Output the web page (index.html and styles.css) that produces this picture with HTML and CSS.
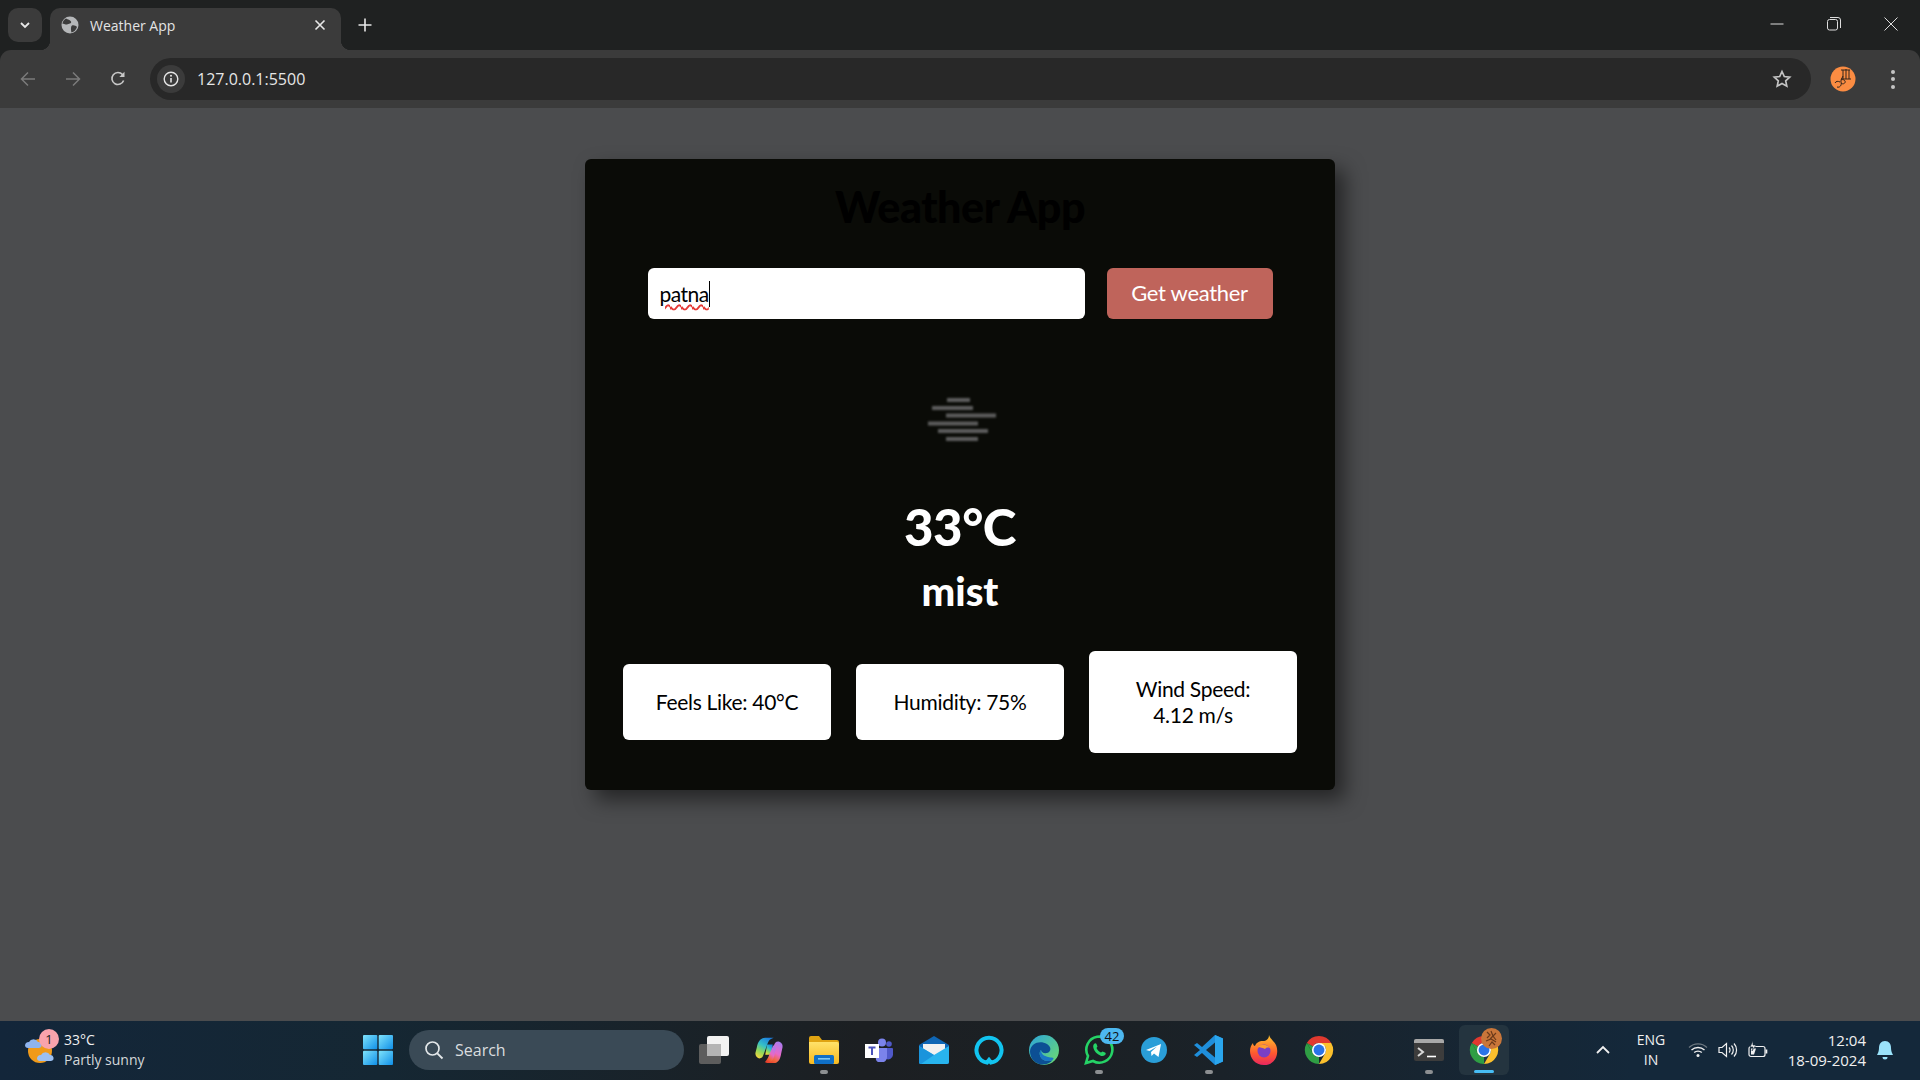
FILE: index.html
```html
<!DOCTYPE html>
<html lang="en">
<head>
<meta charset="UTF-8">
<meta name="viewport" content="width=device-width, initial-scale=1.0">
<title>Weather App</title>
<link rel="stylesheet" href="styles.css">
</head>
<body>

<svg class="defs" width="0" height="0">
    <defs>
        <symbol id="chrome" viewBox="0 0 32 32">
            <path d="M3 8.500L9.500 19.750A7.500 7.500 0 0 0 16 23.500L16 31A15 15 0 0 1 3 8.500Z" fill="#2f9e44"/>
            <path d="M29 8.500A15 15 0 0 1 16 31L22.500 19.750A7.500 7.500 0 0 0 22.500 12.250L16 8.500Z" fill="#fbc02d"/>
            <path d="M3 8.500A15 15 0 0 1 29 8.500H16A7.500 7.500 0 0 0 9.500 12.200Z" fill="#e0392f"/>
            <path d="M3 8.500L9.500 19.750L12 16L9.500 12.200Z" fill="#2f9e44"/>
            <circle cx="16" cy="16" r="7.500" fill="#fff"/>
            <circle cx="16" cy="16" r="5.800" fill="#2a73e8"/>
        </symbol>
        <linearGradient id="winBlue" x1="0" y1="0" x2="1" y2="1">
            <stop offset="0" stop-color="#7fe3fb"/>
            <stop offset="1" stop-color="#0f8fe8"/>
        </linearGradient>
        <linearGradient id="folder" x1="0" y1="0" x2="0" y2="1">
            <stop offset="0" stop-color="#ffe26a"/>
            <stop offset="1" stop-color="#f7b91f"/>
        </linearGradient>
        <linearGradient id="copilotLeft" x1=".7" y1="0" x2=".2" y2="1">
            <stop offset="0" stop-color="#1d7fe0"/>
            <stop offset=".4" stop-color="#35c0c8"/>
            <stop offset=".7" stop-color="#8fd85a"/>
            <stop offset="1" stop-color="#f4d63e"/>
        </linearGradient>
        <linearGradient id="copilotRight" x1=".8" y1="0" x2=".3" y2="1">
            <stop offset="0" stop-color="#a87cf0"/>
            <stop offset=".5" stop-color="#e868c8"/>
            <stop offset=".8" stop-color="#f0683c"/>
            <stop offset="1" stop-color="#e8402c"/>
        </linearGradient>
        <linearGradient id="edge" x1="0" y1="0" x2="1" y2="1">
            <stop offset="0" stop-color="#2ba5dc"/>
            <stop offset="1" stop-color="#6fdc6a"/>
        </linearGradient>
        <linearGradient id="fox" x1="0" y1="0" x2="0" y2="1">
            <stop offset="0" stop-color="#ffc62e"/>
            <stop offset=".6" stop-color="#ff5a2e"/>
            <stop offset="1" stop-color="#e9275f"/>
        </linearGradient>
    </defs>
</svg>

<div class="tabstrip">
    <div class="tab-search">
        <svg width="12" height="12" viewBox="0 0 12 12"><path d="M2 4l4 4 4-4" fill="none" stroke="#e8e8e8" stroke-width="1.800"/></svg>
    </div>
    <div class="tab">
        <svg class="favicon" width="18" height="18" viewBox="0 0 18 18">
            <circle cx="9" cy="9" r="8.500" fill="#b5b7b9"/>
            <path d="M5 2.500C7 4 9 3.500 10 5.500S7.500 8 6 8.500 3 7 1.500 8C1.500 5.500 3 3.500 5 2.500ZM11 9.500C13 9 15 10 16 11 15 14 13 16 10.500 16.500 10 14.500 9.500 10.500 11 9.500Z" fill="#3b3b3b"/>
        </svg>
        <span class="tab-title">Weather App</span>
        <svg class="tab-close" width="12" height="12" viewBox="0 0 12 12"><path d="M1.500 1.500l9 9M10.500 1.500l-9 9" stroke="#e8e8e8" stroke-width="1.600"/></svg>
    </div>
    <div class="new-tab">
        <svg width="14" height="14" viewBox="0 0 14 14"><path d="M7 .5v13M.5 7h13" stroke="#e8e8e8" stroke-width="1.600"/></svg>
    </div>
    <div class="window-controls">
        <div class="win-btn"><svg width="14" height="14" viewBox="0 0 14 14"><path d="M.500 7h13" stroke="#ddd" stroke-width="1"/></svg></div>
        <div class="win-btn"><svg width="14" height="14" viewBox="0 0 14 14"><rect x=".5" y="2.500" width="10" height="10.500" rx="2" fill="none" stroke="#ddd"/><path d="M3 .5h8a2.500 2.500 0 0 1 2.500 2.500v8" fill="none" stroke="#ddd"/></svg></div>
        <div class="win-btn"><svg width="14" height="14" viewBox="0 0 14 14"><path d="M.500.500l13 13M13.500.500l-13 13" stroke="#ddd" stroke-width="1"/></svg></div>
    </div>
</div>

<div class="toolbar">
    <div class="nav-btn"><svg width="16" height="16" viewBox="0 0 16 16"><path d="M15 8H1.500M8 1.500L1.500 8 8 14.500" fill="none" stroke="#7b7b7b" stroke-width="1.500"/></svg></div>
    <div class="nav-btn"><svg width="16" height="16" viewBox="0 0 16 16"><path d="M1 8h13.500M8 1.500L14.500 8 8 14.500" fill="none" stroke="#7b7b7b" stroke-width="1.500"/></svg></div>
    <div class="nav-btn"><svg width="16" height="16" viewBox="0 0 16 16"><path d="M13.600 9.500A6 6 0 1 1 12.500 3.600" fill="none" stroke="#c8c8c8" stroke-width="1.600"/><path d="M14.500 .8v5.200H9.300z" fill="#c8c8c8"/></svg></div>
    <div class="omnibox">
        <div class="site-info">
            <svg width="16" height="16" viewBox="0 0 16 16"><circle cx="8" cy="8" r="6.800" fill="none" stroke="#e4e4e4" stroke-width="1.400"/><path d="M8 7v4.500" stroke="#e4e4e4" stroke-width="1.600"/><circle cx="8" cy="4.800" r="1" fill="#e4e4e4"/></svg>
        </div>
        <span class="url">127.0.0.1:5500</span>
        <svg class="star" width="20" height="20" viewBox="0 0 20 20"><path d="M10 2.500l2.300 5 5.400.6-4 3.700 1.100 5.400L10 14.500l-4.800 2.700 1.100-5.400-4-3.700 5.400-.6z" fill="none" stroke="#c4c4c4" stroke-width="1.700"/></svg>
    </div>
    <svg class="avatar" width="26" height="26" viewBox="0 0 26 26">
        <circle cx="13" cy="13" r="12.500" fill="#fb8c42"/>
        <path d="M11 4h9M13 4v9M16 3v10M19 4v9M11 13h10M7 21c3 1 5-2 4-5s3-3 4-1-2 4-4 2M5 17c1-2 3-2 5-1M13 10l-2 4" fill="none" stroke="#33241b" stroke-width="1"/>
    </svg>
    <div class="menu-dots"><span></span><span></span><span></span></div>
</div>

<div class="page">
    <div class="card">
        <h1 class="app-title">Weather App</h1>
        <div class="search-form">
            <div class="city-input"><span class="city-text">patna</span></div>
            <button class="get-btn">Get weather</button>
        </div>
        <svg class="weather-icon" width="100" height="100" viewBox="0 0 100 100">
            <g class="mist-bars">
                <rect x="37" y="28" width="23" height="4"/>
                <rect x="22" y="36" width="41" height="4"/>
                <rect x="36" y="43.500" width="50" height="4"/>
                <rect x="18" y="51.500" width="50" height="4"/>
                <rect x="28" y="59" width="50" height="4"/>
                <rect x="36" y="67" width="32" height="4"/>
            </g>
        </svg>
        <div class="temp">33°C</div>
        <div class="desc">mist</div>
        <div class="details">
            <div class="detail">Feels Like: 40°C</div>
            <div class="detail">Humidity: 75%</div>
            <div class="detail">Wind Speed:<br>4.12 m/s</div>
        </div>
    </div>
</div>

<div class="taskbar">
    <div class="weather-widget">
        <div class="widget-icon">
            <svg width="32" height="34" viewBox="0 0 32 34">
                <circle cx="16" cy="18" r="12" fill="#f09a1a"/>
                <path d="M1 13a4 4 0 0 1 4-4 5 5 0 0 1 9 0 3 3 0 0 1 1 6H4a3 3 0 0 1-3-2Z" fill="#8fb4ee"/>
                <path d="M13 26a4 4 0 0 1 4-4 5 5 0 0 1 9 0 3 3 0 0 1 1 6H16a3 3 0 0 1-3-2Z" fill="#9cc0f2"/>
            </svg>
            <span class="widget-badge">1</span>
        </div>
        <div class="widget-text">
            <div class="widget-temp">33°C</div>
            <div class="widget-desc">Partly sunny</div>
        </div>
    </div>

    <div class="slot">
        <svg width="30" height="30" viewBox="0 0 30 30">
            <rect x="0" y="0" width="14.300" height="14.300" rx="1" fill="url(#winBlue)"/>
            <rect x="15.700" y="0" width="14.300" height="14.300" rx="1" fill="url(#winBlue)"/>
            <rect x="0" y="15.700" width="14.300" height="14.300" rx="1" fill="url(#winBlue)"/>
            <rect x="15.700" y="15.700" width="14.300" height="14.300" rx="1" fill="url(#winBlue)"/>
        </svg>
    </div>
    <div class="search-pill">
        <svg width="20" height="20" viewBox="0 0 20 20"><circle cx="8.500" cy="8.500" r="6.500" fill="none" stroke="#e4e8ea" stroke-width="1.700"/><path d="M13.300 13.300L18.500 18.500" stroke="#e4e8ea" stroke-width="1.900"/></svg>
        <span>Search</span>
    </div>

    <div class="slot first-app">
        <svg width="30" height="28" viewBox="0 0 30 28">
            <rect x="0" y="8" width="22" height="20" rx="2" fill="#5d5d5d"/>
            <rect x="8" y="0" width="22" height="20" rx="2" fill="#f2f2f2"/>
            <rect x="8" y="8" width="14" height="12" fill="#b4b4b4"/>
        </svg>
    </div>
    <div class="slot">
        <svg width="30" height="28" viewBox="0 0 30 30">
            <path d="M20 29h-9c3-1 4-4 5-7l4-11c1-3 2-5 5-5 3 .5 5 3 4.500 6L28 19c-1 6-3 10-8 10Z" fill="url(#copilotRight)"/>
            <path d="M20 2h-9C6 2 3 6 2 12L.5 18c-.5 3 1.500 5 4 6 3 0 4-2 5-5l4-11c1-3 3-5 6.500-6Z" fill="url(#copilotLeft)"/>
            <path d="M13 9h6l-2 11h-6Z" fill="url(#copilotLeft)"/>
            <path d="M19.500 10l-5 12c-1 2-2 4-4 6h6c2-1 3-3 4-6l2-9Z" fill="url(#copilotRight)"/>
        </svg>
    </div>
    <div class="slot running">
        <svg width="30" height="28" viewBox="0 0 30 28">
            <path d="M0 2a2 2 0 0 1 2-2h8l3 4h15a2 2 0 0 1 2 2v4H0Z" fill="#e0a412"/>
            <path d="M0 6h28a2 2 0 0 1 2 2v18a2 2 0 0 1-2 2H2a2 2 0 0 1-2-2Z" fill="url(#folder)"/>
            <rect x="5" y="19" width="20" height="9" rx="1.500" fill="#0f6fc6"/>
            <rect x="9" y="22" width="12" height="1.600" fill="#7cc7f5"/>
        </svg>
    </div>
    <div class="slot">
        <svg width="28" height="24" viewBox="0 0 28 24">
            <circle cx="17" cy="4.500" r="4" fill="#7b83eb"/>
            <circle cx="24" cy="6" r="2.800" fill="#5059c9"/>
            <path d="M20 10h7a1 1 0 0 1 1 1v6a5 5 0 0 1-7 4Z" fill="#5059c9"/>
            <path d="M10 10h12v9a6 6 0 0 1-11 3Z" fill="#7b83eb"/>
            <rect x="0" y="6" width="14" height="14" fill="#fff"/>
            <path d="M3.500 9.500h7M7 9.500v7.500" stroke="#4b53bc" stroke-width="2"/>
        </svg>
    </div>
    <div class="slot">
        <svg width="30" height="28" viewBox="0 0 30 28">
            <path d="M0 9L15 0l15 9v17a2 2 0 0 1-2 2H2a2 2 0 0 1-2-2Z" fill="#0f66b5"/>
            <path d="M4 8h22v6l-11 6-11-6Z" fill="#f1f1f1"/>
            <path d="M0 10l15 9 15-9v16a2 2 0 0 1-2 2H2a2 2 0 0 1-2-2Z" fill="#28b4ee"/>
            <path d="M0 26V10l15 9L2 28a2 2 0 0 1-2-2Z" fill="#1a94dc"/>
        </svg>
    </div>
    <div class="slot">
        <svg width="30" height="30" viewBox="0 0 30 30">
            <path d="M13 27.500A12.500 12.500 0 1 1 17 27.500L15 25Z" fill="none" stroke="#12c4f0" stroke-width="4"/>
        </svg>
    </div>
    <div class="slot">
        <svg width="30" height="30" viewBox="0 0 30 30">
            <circle cx="15" cy="15" r="15" fill="url(#edge)"/>
            <path d="M1 16C2 8 11 5 18 9c5 3 4 8 0 9-3 .5-6-.5-6-3-3 3-1 11 7 11 2 0 4-.5 5-1.500C21 29 15 30.500 10 29 4 27 1 22 1 16Z" fill="#0c4f94"/>
            <path d="M12 15c-3 3-1 11 7 11 2 0 4-.5 5-1.500C26 22 22 23 19 22c-4-1-7-3-7-7Z" fill="#1976c6"/>
        </svg>
    </div>
    <div class="slot running">
        <svg width="30" height="30" viewBox="0 0 30 30">
            <path d="M2 28l2-7A13 13 0 1 1 9 26Z" fill="none" stroke="#25d366" stroke-width="2.600"/>
            <path d="M10 9c1-1 2-1 2.500 0l1 2.500-1 1.500c1 2 2.500 3.500 4.500 4.500l1.500-1 2.500 1c1 .5 1 1.500 0 2.500-2 2-5 1-8-1.500S8 11 10 9Z" fill="#25d366"/>
        </svg>
        <span class="count-badge">42</span>
    </div>
    <div class="slot">
        <svg width="26" height="26" viewBox="0 0 26 26">
            <circle cx="13" cy="13" r="13" fill="#2a9ed8"/>
            <path d="M5 13l15-6-2.500 13-4.500-3.500-2.500 2.500-.5-4 6-5.500-7.500 4.500Z" fill="#fff"/>
        </svg>
    </div>
    <div class="slot running">
        <svg width="30" height="30" viewBox="0 0 30 30">
            <path d="M21 0l8 3.500v23L21 30 8 18l-5 4-3-2 6-5-6-5 3-2 5 4Z" fill="#1f8fdc"/>
            <path d="M21 7.500L12 15l9 7.500Z" fill="#1c2a33"/>
            <path d="M21 0l8 3.500v23L21 30Z" fill="#2aa6ee"/>
        </svg>
    </div>
    <div class="slot">
        <svg width="28" height="30" viewBox="0 0 28 30">
            <path d="M19 0c1 4 5 6 7 10 3 7 1 20-12 20C5 30 0 23 0 16c0-3 1-6 3-8 0 2 1 3 2 3 1-3 4-5 8-5 3 0 6-2 6-6Z" fill="url(#fox)"/>
            <circle cx="14" cy="16" r="6.500" fill="#7a3fc4"/>
            <path d="M8 12c3-3 9-3 12 1-3-1-4 0-5 1-2-1-5-2-7-2Z" fill="#ff9d2e"/>
        </svg>
    </div>
    <div class="slot"><svg width="30" height="30"><use href="#chrome"/></svg></div>

    <div class="slot running terminal-slot">
        <svg width="30" height="22" viewBox="0 0 30 22">
            <rect width="30" height="22" rx="2" fill="#3c3c3c"/>
            <path d="M0 2a2 2 0 0 1 2-2h26a2 2 0 0 1 2 2v2H0Z" fill="#a8a8a8"/>
            <path d="M4 9l5 4-5 4" fill="none" stroke="#d8d8d8" stroke-width="2"/>
            <path d="M13 17.500h9" stroke="#fff" stroke-width="1.600"/>
        </svg>
    </div>
    <div class="slot active">
        <div class="active-box">
            <svg width="30" height="30"><use href="#chrome"/></svg>
            <svg class="profile-badge" width="21" height="21" viewBox="0 0 21 21">
                <circle cx="10.500" cy="10.500" r="10.500" fill="#c9763a"/>
                <path d="M6 4l3 3-3 3M10 3l2 5-3 3M15 5l-3 3 3 4M5 13l5-2 5 3M8 18l3-4 3 3" fill="none" stroke="#6b3a1a" stroke-width="1.200"/>
            </svg>
        </div>
    </div>

    <div class="tray">
        <svg class="tray-chevron" width="16" height="16" viewBox="0 0 16 16"><path d="M2 11l6-6 6 6" fill="none" stroke="#f0f0f0" stroke-width="1.800"/></svg>
        <div class="lang">ENG<br>IN</div>
        <svg class="tray-icon wifi" width="20" height="20" viewBox="0 0 20 20">
            <path d="M1 7.500a13 13 0 0 1 18 0" fill="none" stroke="#6d7880" stroke-width="1.300"/>
            <path d="M3.500 10a9.500 9.500 0 0 1 13 0M6.200 12.600a5.500 5.500 0 0 1 7.600 0" fill="none" stroke="#f0f0f0" stroke-width="1.400"/>
            <circle cx="10" cy="15.500" r="1.500" fill="#f0f0f0"/>
        </svg>
        <svg class="tray-icon" width="20" height="20" viewBox="0 0 20 20">
            <path d="M1 7.500h3L8.500 3.500v13L4 12.500H1Z" fill="none" stroke="#f0f0f0" stroke-width="1.200"/>
            <path d="M11 7.500a3.500 3.500 0 0 1 0 5M13.500 5.500a6.500 6.500 0 0 1 0 9M16 3.500a9.500 9.500 0 0 1 0 13" fill="none" stroke="#f0f0f0" stroke-width="1.200"/>
        </svg>
        <svg class="tray-icon" width="20" height="20" viewBox="0 0 20 20">
            <rect x="1" y="6.500" width="16" height="10" rx="2" fill="none" stroke="#f0f0f0" stroke-width="1.200"/>
            <rect x="17.500" y="9.500" width="1.800" height="4" fill="#f0f0f0"/>
            <path d="M3 8.500h5l-2 6H3Z" fill="#f0f0f0"/>
            <path d="M5 1L2 7h3l-1 4 4-6H5Z" fill="#f0f0f0" stroke="#14283a" stroke-width=".6"/>
        </svg>
        <div class="clock">
            <div>12:04</div>
            <div>18-09-2024</div>
        </div>
        <svg class="tray-icon bell" width="20" height="22" viewBox="0 0 20 22">
            <path d="M10 2c4 0 6 3 6 7 0 3 1 5 2 7H2c1-2 2-4 2-7 0-4 2-7 6-7Z" fill="#9be3fb"/>
            <path d="M7.500 18h5a2.500 2.500 0 0 1-5 0Z" fill="#9be3fb"/>
        </svg>
    </div>
</div>

</body>
</html>
```

FILE: styles.css
```css
* {
    box-sizing: border-box;
}
html, body {
    height: 100%;
}
body {
    margin: 0;
    height: 100vh;
    overflow: hidden;
    display: flex;
    flex-direction: column;
    background-color: #1f2121;
    font-family: "Open Sans", "Liberation Sans", sans-serif;
}
.defs {
    position: absolute;
}

/* browser tabs */
.tabstrip {
    height: 50px;
    flex-shrink: 0;
    display: flex;
    align-items: flex-start;
    padding: 8px 0 0 8px;
}
.tab-search {
    width: 34px;
    height: 34px;
    border-radius: 10px;
    background-color: #3b3b3b;
    display: flex;
    align-items: center;
    justify-content: center;
}
.tab {
    position: relative;
    width: 291px;
    height: 42px;
    margin-left: 8px;
    padding: 0 15px 8px 11px;
    background-color: #3b3b3b;
    border-radius: 10px 10px 0 0;
    display: flex;
    align-items: center;
    gap: 11px;
    color: #e3e3e3;
    font-size: 14px;
}
.tab::before,
.tab::after {
    content: "";
    position: absolute;
    bottom: 0;
    width: 10px;
    height: 10px;
}
.tab::before {
    left: -10px;
    background: radial-gradient(circle at 0 0, transparent 10px, #3b3b3b 10.5px);
}
.tab::after {
    right: -10px;
    background: radial-gradient(circle at 100% 0, transparent 10px, #3b3b3b 10.5px);
}
.tab-title {
    flex: 1;
}
.new-tab {
    width: 24px;
    height: 34px;
    margin-left: 12px;
    display: flex;
    align-items: center;
    justify-content: center;
}
.window-controls {
    margin-left: auto;
    padding-right: 1px;
    display: flex;
}
.win-btn {
    width: 57px;
    height: 32px;
    display: flex;
    align-items: center;
    justify-content: center;
}

/* address bar */
.toolbar {
    height: 58px;
    flex-shrink: 0;
    display: flex;
    align-items: center;
    padding: 0 21px 0 5px;
    background-color: #3b3b3b;
    border-radius: 11px 11px 0 0;
}
.nav-btn {
    width: 45px;
    display: flex;
    justify-content: center;
}
.omnibox {
    flex: 1;
    height: 42px;
    margin-left: 10px;
    padding: 0 19px 0 7px;
    display: flex;
    align-items: center;
    background-color: #282828;
    border-radius: 21px;
}
.site-info {
    width: 28px;
    height: 28px;
    border-radius: 50%;
    background-color: #3b3b3b;
    display: flex;
    align-items: center;
    justify-content: center;
}
.url {
    margin-left: 12px;
    color: #e6e6e6;
    font-size: 16px;
}
.star {
    margin-left: auto;
}
.avatar {
    margin-left: 19px;
}
.menu-dots {
    width: 12px;
    margin-left: 31px;
    display: flex;
    flex-direction: column;
    align-items: center;
    gap: 3.500px;
}
.menu-dots span {
    width: 4px;
    height: 4px;
    border-radius: 50%;
    background-color: #c4c4c4;
}

/* weather app */
.page {
    flex: 1;
    min-height: 0;
    padding-top: 51px;
    background-color: #4b4c4e;
    display: flex;
    justify-content: center;
    align-items: flex-start;
    font-family: Lato, "Liberation Sans", sans-serif;
}
.card {
    width: 750px;
    padding: 23px 38px 37px;
    background-color: #0a0b07;
    border-radius: 6px;
    box-shadow: 10px 10px 20px rgba(0, 0, 0, 0.5);
    display: flex;
    flex-direction: column;
    align-items: center;
}
.app-title {
    margin: 0;
    height: 50px;
    line-height: 50px;
    font-size: 43px;
    font-weight: 900;
    letter-spacing: -0.4px;
    color: #000;
}
.search-form {
    margin-top: 36px;
    display: flex;
    gap: 22px;
}
.city-input {
    width: 437px;
    height: 51px;
    padding-left: 12px;
    background-color: #fff;
    border-radius: 6px;
    display: flex;
    align-items: center;
    color: #000;
    font-size: 21px;
}
.city-text {
    line-height: 26px;
    border-right: 1px solid #000;
    letter-spacing: -0.5px;
    text-decoration: underline wavy #e53935 1.500px;
    text-underline-offset: 2px;
}
.get-btn {
    width: 166px;
    height: 51px;
    padding: 0 0 2px;
    border: none;
    border-radius: 6px;
    background-color: #bf645b;
    color: #fff;
    font-family: inherit;
    font-size: 22px;
    letter-spacing: -0.3px;
}
.weather-icon {
    margin-top: 51px;
}
.mist-bars {
    fill: #5e5e5e;
    filter: blur(0.9px);
}
.temp {
    margin-top: 27px;
    height: 60px;
    line-height: 60px;
    color: #fff;
    font-size: 51px;
    font-weight: 900;
    letter-spacing: -0.5px;
}
.desc {
    margin-top: 12px;
    height: 44px;
    line-height: 44px;
    color: #fff;
    font-size: 40px;
    font-weight: 900;
}
.details {
    margin-top: 38px;
    width: 100%;
    display: flex;
    align-items: center;
    gap: 25px;
}
.detail {
    flex: 1;
    padding: 25px 5px;
    background-color: #fff;
    border-radius: 6px;
    color: #000;
    text-align: center;
    font-size: 21px;
    line-height: 26px;
    letter-spacing: -0.3px;
}

/* windows taskbar */
.taskbar {
    height: 59px;
    flex-shrink: 0;
    padding-bottom: 2px;
    display: flex;
    align-items: center;
    background: linear-gradient(90deg, #13263a 0, #152733 20%, #1c1f22 45%, #1b2126 60%, #14283a 85%, #14283a 100%);
    color: #f0f0f0;
}
.weather-widget {
    width: 350px;
    padding-left: 24px;
    display: flex;
    align-items: center;
    gap: 8px;
}
.widget-icon {
    position: relative;
    width: 32px;
    height: 34px;
}
.widget-badge {
    position: absolute;
    top: -4px;
    left: 15px;
    width: 20px;
    height: 20px;
    border-radius: 50%;
    background-color: #f9a3ac;
    color: #222;
    font-size: 13px;
    line-height: 20px;
    text-align: center;
}
.widget-text {
    font-size: 14px;
    line-height: 20px;
}
.widget-desc {
    color: #d4d8da;
}
.slot {
    position: relative;
    width: 55px;
    height: 57px;
    flex-shrink: 0;
    display: flex;
    align-items: center;
    justify-content: center;
}
.running::after {
    content: "";
    position: absolute;
    left: 24px;
    bottom: 4px;
    width: 8px;
    height: 4px;
    border-radius: 2px;
    background-color: #8c8f92;
}
.search-pill {
    width: 275px;
    height: 40px;
    margin-left: 4px;
    padding-left: 15px;
    flex-shrink: 0;
    display: flex;
    align-items: center;
    gap: 11px;
    background-color: #3a4a56;
    border-radius: 20px;
    color: #d9dddf;
    font-size: 16px;
}
.first-app {
    margin-left: 2px;
}
.count-badge {
    position: absolute;
    top: 7px;
    left: 29px;
    width: 24px;
    height: 16px;
    border-radius: 8px;
    background-color: #4db8f0;
    color: #111;
    font-size: 13px;
    line-height: 16px;
    text-align: center;
}
.terminal-slot {
    margin-left: 55px;
}
.active-box {
    width: 50px;
    height: 50px;
    border-radius: 6px;
    background-color: #24343f;
    display: flex;
    align-items: center;
    justify-content: center;
}
.active::after {
    content: "";
    position: absolute;
    left: 18px;
    bottom: 5px;
    width: 20px;
    height: 3px;
    border-radius: 2px;
    background-color: #47bdf5;
}
.profile-badge {
    position: absolute;
    top: 7px;
    left: 25px;
}
.tray {
    margin-left: auto;
    padding-right: 25px;
    display: flex;
    align-items: center;
}
.lang {
    width: 32px;
    margin-left: 24px;
    margin-right: 21px;
    text-align: center;
    font-size: 14px;
    line-height: 20px;
}
.tray-icon {
    margin-right: 10px;
}
.clock {
    width: 81px;
    margin-left: 7px;
    text-align: right;
    font-size: 15px;
    line-height: 20px;
    white-space: nowrap;
}
.tray-icon.bell {
    margin: 0 0 0 9px;
}
```
